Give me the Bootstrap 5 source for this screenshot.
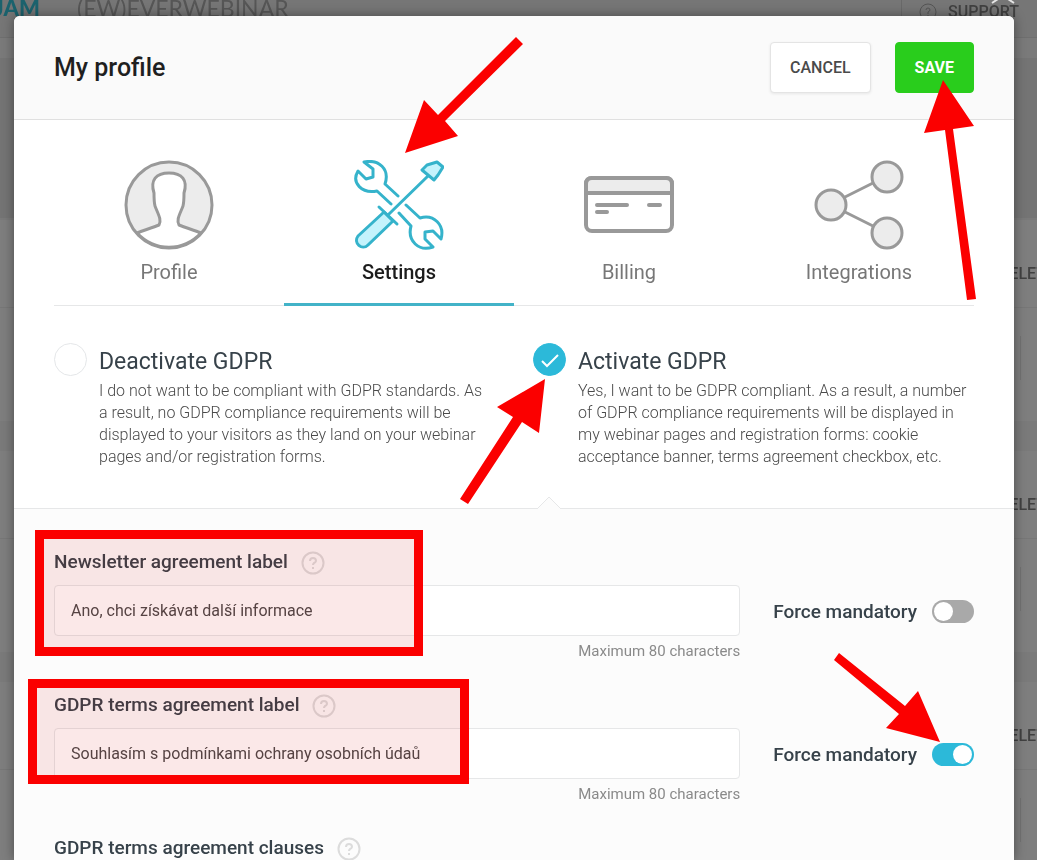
<!DOCTYPE html>
<html lang="en">
<head>
<meta charset="utf-8">
<meta name="viewport" content="width=device-width, initial-scale=1">
<title>My profile</title>
<link rel="stylesheet" href="https://cdn.jsdelivr.net/npm/bootstrap@5.3.0/dist/css/bootstrap.min.css">
<style>
  :root { --accent: #2cb9d9; --ink: #37424a; --line: #e6e7e8; --mark-red: #fb0000; }
  body { font-family: Roboto, "Liberation Sans", sans-serif; font-size: 16px; line-height: 22px; color: #1f1f1f; background: #7a7a7a; }

  /* dimmed page under the dialog */
  .page-under { z-index: 0; color: #414141; font-weight: 500; }
  .under-bar { height: 38px; border-bottom: 1px solid #6f6f6f; background: #767676; }
  .under-brand { font-family: Lato, sans-serif; font-size: 22px; line-height: 16px; height: 16px; }
  .brand-jam { width: 40px; color: #1b626d; font-weight: 900; }
  .brand-ever { color: #565656; font-weight: 400; font-size: 23px; margin-left: 37px; }
  .under-support { width: 136px; padding: 2px 18px 0 17px; border-left: 1px solid #696969; line-height: 20px; height: 38px; }
  .under-hero { height: 160px; margin-top: 20px; background: #747474; }
  .under-card { height: 201px; margin: 2px -18px 30px 0; background: #7e7e7e; }
  .under-card-head { height: 88px; padding-top: 43px; border-bottom: 1px solid #777; }
  .under-card-body { height: 44px; width: 35px; margin-top: 28px; border-left: 1px solid #727272; }
  .close-mark { z-index: 1; top: 0; right: 21px; }

  /* dialog */
  .profile-panel { z-index: 1; margin: 16px 23px 0 14px; background: #fff; border-radius: 6px 6px 0 0; box-shadow: 0 0 12px rgba(0,0,0,.4); }
  .panel-head { padding: 26px 40px; background: #fafafa; border-bottom: 1px solid #e0e0e0; border-radius: 6px 6px 0 0; }
  .panel-head h1 { font-size: 25px; line-height: 30px; font-weight: 500; }
  .panel-btn { height: 51px; padding: 0 19px; border-radius: 4px; font-size: 16px; font-weight: 500; }
  .btn-cancel, .btn-cancel:hover { background: #fff; border: 1px solid #e4e4e4; color: #4a4a4a; box-shadow: 0 1px 3px rgba(0,0,0,.08); }
  .btn-save, .btn-save:hover { background: #29cd1c; border: 1px solid #29cd1c; color: #fff; font-weight: 700; }

  .profile-tabs { margin: 0 40px; border-bottom: 1px solid var(--line); }
  .profile-tabs a { margin-bottom: -1px; padding: 40px 0 19px; font-size: 20px; line-height: 24px; color: #777; text-decoration: none; border-bottom: 3px solid transparent; }
  .profile-tabs a.active { color: #1c1c1c; font-weight: 500; border-color: #42b3c8; }
  .tab-icon { width: 90px; height: 90px; margin-bottom: 10px; fill: none; stroke: #999; stroke-width: 4; stroke-linecap: round; stroke-linejoin: round; }
  .tab-icon .tint { fill: #ececec; }
  .profile-tabs a.active .tab-icon { stroke: #35b3cb; stroke-width: 3; }
  .profile-tabs a.active .tint { fill: #c4f3fc; }

  .gdpr-options { display: grid; grid-template-columns: 1fr 1fr; column-gap: 38px; padding: 37px 40px 40px; }
  .gdpr-option { gap: 12px; }
  .gdpr-option input { width: 33px; height: 33px; border: 1px solid #e4e6e8; }
  .gdpr-option input:checked { border-color: var(--accent); background-color: var(--accent); background-size: 24px; background-position: center;
    background-image: url("data:image/svg+xml,%3Csvg xmlns='http://www.w3.org/2000/svg' viewBox='0 0 24 24'%3E%3Cpath d='M4 13l5 5L20 7' fill='none' stroke='white' stroke-width='2'/%3E%3C/svg%3E"); }
  .option-text { padding: 1px 4px 0 0; }
  .option-title { font-size: 23px; line-height: 36px; color: var(--ink); }
  .gdpr-option p { font-weight: 300; color: #4a4a4a; }
  .option-caret { left: 3px; bottom: -41px; width: 26px; height: 13px; }

  .gdpr-form { padding: 41px 40px 0; background: #fcfcfc; border-top: 1px solid var(--line); }
  .form-line { gap: 33px; margin-bottom: 31px; }
  .field-label { gap: 13px; height: 24px; margin-bottom: 11px; font-size: 19px; line-height: 24px; font-weight: 500; color: var(--ink); }
  .help-btn { width: 24px; height: 24px; margin-top: 2px; }
  .help-btn svg { width: 24px; height: 24px; fill: none; stroke: #dcdcdc; stroke-width: 2; }
  .field-input, .field-input:focus { height: 51px; padding: 0 16px; border: 1px solid var(--line); border-radius: 4px; font-size: 16px; color: #4a4a4a; box-shadow: none; }
  .field-note { margin-top: 4px; font-size: 15px; color: #8a8a8a; text-align: right; }
  .force { gap: 15px; height: 51px; margin-top: 36px; font-size: 19px; font-weight: 500; color: var(--ink); }
  .force input[type=checkbox] { width: 42px; height: 23px; border: 0; background-color: #a9a9a9; background-size: 23px;
    background-image: url("data:image/svg+xml,%3Csvg xmlns='http://www.w3.org/2000/svg' viewBox='0 0 23 23'%3E%3Ccircle cx='11.5' cy='11.5' r='9.5' fill='white'/%3E%3C/svg%3E"); }
  .force input[type=checkbox]:checked { background-color: var(--accent);
    background-image: url("data:image/svg+xml,%3Csvg xmlns='http://www.w3.org/2000/svg' viewBox='0 0 23 23'%3E%3Ccircle cx='11.5' cy='11.5' r='9.5' fill='white'/%3E%3C/svg%3E"); }

  /* tutorial marks lying over the controls */
  .hint { position: absolute; z-index: 5; pointer-events: none; }
  svg.hint { fill: var(--mark-red); overflow: visible; }
  .hint-save { left: 29px; top: 38px; width: 50px; height: 220px; }
  .hint-tab { left: 121px; top: -83px; width: 118px; height: 116px; }
  .hint-radio { left: -70px; top: 36px; width: 50px; height: 126px; }
  .hint-toggle { right: 34px; top: -76px; width: 106px; height: 90px; }
  .hint-box { border: 9px solid var(--mark-red); background: rgba(215,0,0,.09); }
  .box-newsletter { left: -19px; top: -20px; width: 388px; height: 126px; }
  .box-terms { left: -26px; top: -14px; width: 441px; height: 105px; }
</style>
</head>
<body class="min-vh-100 d-flex flex-column position-relative overflow-hidden">

<div class="page-under position-fixed top-0 start-0 w-100 h-100 overflow-hidden" aria-hidden="true">
  <div class="under-bar d-flex">
    <div class="under-brand brand-jam d-flex justify-content-end">JAM</div>
    <div class="under-brand brand-ever">(EW)EVERWEBINAR</div>
    <div class="under-support ms-auto d-flex justify-content-between">
      <svg width="18" height="20" viewBox="0 0 18 20" fill="none" stroke="#555"><circle cx="9" cy="10" r="8"/><path d="M7 8q0-2 2-2t2 2q0 1-2 2v2M9 13v1"/></svg>
      <span>SUPPORT</span>
    </div>
  </div>
  <div class="under-hero"></div>
  <div class="under-card"><div class="under-card-head text-end">DELETE</div><div class="under-card-body ms-auto"></div></div>
  <div class="under-card"><div class="under-card-head text-end">DELETE</div><div class="under-card-body ms-auto"></div></div>
  <div class="under-card"><div class="under-card-head text-end">DELETE</div><div class="under-card-body ms-auto"></div></div>
</div>
<svg class="close-mark position-absolute" width="26" height="4" viewBox="0 0 26 4" fill="none" stroke="#e5e5e5" stroke-width="2"><path d="M2 3l6-4M24 3l-6-4"/></svg>

<main class="profile-panel position-relative flex-grow-1 d-flex flex-column">
  <header class="panel-head d-flex align-items-center">
    <h1 class="m-0 me-auto">My profile</h1>
    <button type="button" class="btn panel-btn btn-cancel me-4">CANCEL</button>
    <div class="position-relative">
      <button type="button" class="btn panel-btn btn-save">SAVE</button>
      <svg class="hint hint-save" viewBox="0 0 50 220" aria-hidden="true"><path d="M19 0L0 53l21-3 22 170 9-1L29 49l21-3z"/></svg>
    </div>
  </header>

  <nav class="profile-tabs d-flex">
    <a href="#profile" class="d-flex flex-column align-items-center flex-fill w-25">
      <svg class="tab-icon" viewBox="0 0 90 90"><g stroke-width="3"><circle class="tint" cx="45" cy="45" r="43"/><path fill="#fff" d="M13 73c7-3 15-5 22-8 3-5-1-11-4-19-1-4-1-8-1-13C26 20 32 13 45 13s19 7 15 20c0 5 0 9-1 13-3 8-7 14-4 19 7 3 15 5 22 8-18 19-46 19-64 0z"/></g></svg>
      Profile
    </a>
    <a href="#settings" class="active position-relative d-flex flex-column align-items-center flex-fill w-25" aria-current="page">
      <svg class="tab-icon" viewBox="0 0 90 90">
        <path d="M44 36L31 24C36 9 25-1 10 2l9 7v8l-7 2-8-8C-3 23 8 34 23 31l14 13"/>
        <path d="M52 45l14 13c14-4 25 7 21 21l-8-8-8 1v7l8 8c-14 5-26-6-22-21L45 53"/>
        <path d="M35 54L74 16"/>
        <path class="tint" d="M83 2l6 5-5 8-4 5-12-10 5-5zM30 52L4 76c-5 7 4 15 10 9l25-24z"/>
        <path d="M25 47l18 17"/>
      </svg>
      Settings
      <svg class="hint hint-tab" viewBox="0 0 118 116" aria-hidden="true"><path d="M0 116l19-53 14 15L111 0l7 7-78 77 13 15z"/></svg>
    </a>
    <a href="#billing" class="d-flex flex-column align-items-center flex-fill w-25">
      <svg class="tab-icon" viewBox="0 0 90 90"><rect x="2" y="18" width="86" height="53" rx="6"/><path class="tint" d="M2 33v-9q0-6 6-6h74q6 0 6 6v9z"/><path d="M13 45h30M65 45h11M13 52h10"/></svg>
      Billing
    </a>
    <a href="#integrations" class="d-flex flex-column align-items-center flex-fill w-25">
      <svg class="tab-icon" viewBox="0 0 90 90"><path stroke-width="3" d="M31 37l28-14M31 52l28 14"/><g class="tint" stroke-width="3"><circle cx="17" cy="45" r="15"/><circle cx="73" cy="17" r="15"/><circle cx="73" cy="73" r="15"/></g></svg>
      Integrations
    </a>
  </nav>

  <section class="gdpr-options">
    <div class="gdpr-option d-flex">
      <input class="form-check-input m-0 flex-shrink-0" type="radio" name="gdpr" id="gdprOff">
      <div class="option-text">
        <label class="option-title d-block" for="gdprOff">Deactivate GDPR</label>
        <p class="m-0">I do not want to be compliant with GDPR standards. As a result, no GDPR compliance requirements will be displayed to your visitors as they land on your webinar pages and/or registration forms.</p>
      </div>
    </div>
    <div class="gdpr-option d-flex position-relative">
      <input class="form-check-input m-0 flex-shrink-0" type="radio" name="gdpr" id="gdprOn" checked>
      <div class="option-text">
        <label class="option-title d-block" for="gdprOn">Activate GDPR</label>
        <p class="m-0">Yes, I want to be GDPR compliant. As a result, a number of GDPR compliance requirements will be displayed in my webinar pages and registration forms: cookie acceptance banner, terms agreement checkbox, etc.</p>
      </div>
      <svg class="option-caret position-absolute" viewBox="0 0 26 13" aria-hidden="true"><path d="M1 13L13 1l12 12" fill="#fcfcfc" stroke="#e6e7e8"/></svg>
      <svg class="hint hint-radio" viewBox="0 0 50 126" aria-hidden="true"><path d="M82 0L34 28l16 10L-3 120l8 5L59 43l17 11z" /></svg>
    </div>
  </section>

  <form class="gdpr-form flex-grow-1">
    <div class="form-line d-flex">
      <div class="flex-grow-1 position-relative">
        <div class="field-label d-flex align-items-center">
          <label for="newsletter">Newsletter agreement label</label>
          <button type="button" class="help-btn btn p-0 border-0 d-flex" aria-label="Help"><svg viewBox="0 0 24 24"><circle cx="12" cy="12" r="10.5"/><path d="M9 10q0-3 3-3t3 3q0 1-2 2-1 1-1 2M12 16v2"/></svg></button>
        </div>
        <input type="text" class="form-control field-input" id="newsletter" value="Ano, chci získávat další informace">
        <div class="field-note">Maximum 80 characters</div>
        <div class="hint hint-box box-newsletter"></div>
      </div>
      <div class="force d-flex align-items-center form-switch p-0">
        <label for="forceNews">Force mandatory</label>
        <input class="form-check-input m-0" type="checkbox" role="switch" id="forceNews">
      </div>
    </div>

    <div class="form-line d-flex">
      <div class="flex-grow-1 position-relative">
        <div class="field-label d-flex align-items-center">
          <label for="terms">GDPR terms agreement label</label>
          <button type="button" class="help-btn btn p-0 border-0 d-flex" aria-label="Help"><svg viewBox="0 0 24 24"><circle cx="12" cy="12" r="10.5"/><path d="M9 10q0-3 3-3t3 3q0 1-2 2-1 1-1 2M12 16v2"/></svg></button>
        </div>
        <input type="text" class="form-control field-input" id="terms" value="Souhlasím s podmínkami ochrany osobních údaů">
        <div class="field-note">Maximum 80 characters</div>
        <div class="hint hint-box box-terms"></div>
      </div>
      <div class="force d-flex align-items-center form-switch p-0 position-relative">
        <label for="forceTerms">Force mandatory</label>
        <input class="form-check-input m-0" type="checkbox" role="switch" id="forceTerms" checked>
        <svg class="hint hint-toggle" viewBox="0 0 106 90" aria-hidden="true"><path d="M106 89L84 38 71 53 5 0 0 7l65 54-13 14z"/></svg>
      </div>
    </div>

    <div class="field-label d-flex align-items-center mb-0">
      <span>GDPR terms agreement clauses</span>
      <button type="button" class="help-btn btn p-0 border-0 d-flex" aria-label="Help"><svg viewBox="0 0 24 24"><circle cx="12" cy="12" r="10.5"/><path d="M9 10q0-3 3-3t3 3q0 1-2 2-1 1-1 2M12 16v2"/></svg></button>
    </div>
  </form>
</main>

<script src="https://cdn.jsdelivr.net/npm/bootstrap@5.3.0/dist/js/bootstrap.bundle.min.js"></script>
</body>
</html>
